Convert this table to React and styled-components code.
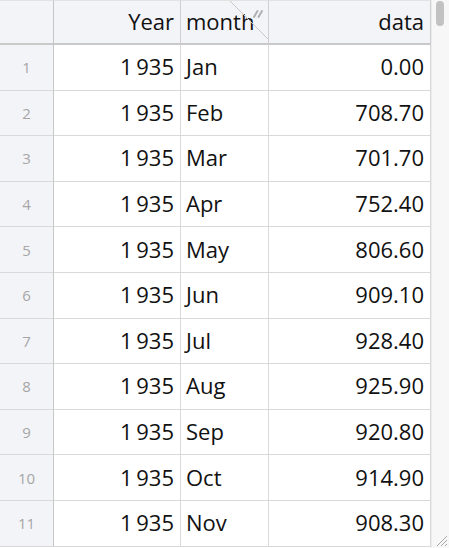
import React from "react";
import styled, { createGlobalStyle } from "styled-components";

const Global = createGlobalStyle`
  html, body { margin: 0; padding: 0; background: #fff; }
  body { font-family: "Open Sans", "Liberation Sans", sans-serif; }
`;

const Frame = styled.div`
  position: relative;
  width: 449px;
  height: 548px;
  overflow: hidden;
  display: flex;
  background: #fff;
`;

const Grid = styled.div`
  display: grid;
  grid-template-columns: 54px 127px 88px 162px;
  grid-template-rows: 45px;
  grid-auto-rows: 45.6px;
  width: 431px;
  align-content: start;
`;

const Cell = styled.div`
  box-sizing: border-box;
  border-right: 1px solid #d9d9d9;
  border-bottom: 1px solid #d9d9d9;
  display: flex;
  align-items: center;
  justify-content: ${(p) => (p.$align === "left" ? "flex-start" : "flex-end")};
  padding: ${(p) => (p.$align === "left" ? "0 0 2px 5px" : "0 6px 2px 0")};
  font-size: 22px;
  color: #111;
  white-space: nowrap;
  background: #fff;
`;

const HeadCell = styled(Cell)`
  position: relative;
  background: #f3f4f8;
  border-top: 1px solid #e2e2e2;
  border-bottom: 2px solid #c9c9c9;
  border-right-color: #cfcfcf;
`;

const RowNum = styled.div`
  box-sizing: border-box;
  background: #f3f4f8;
  border-right: 1px solid #c6c6c6;
  border-bottom: 1px solid #d9d9d9;
  display: flex;
  align-items: center;
  justify-content: center;
  font-size: 15px;
  color: #a6a6a6;
`;

const Corner = styled(RowNum)`
  border-top: 1px solid #e2e2e2;
  border-bottom: 2px solid #c9c9c9;
`;

const Marker = styled.svg`
  position: absolute;
  top: 0;
  right: 0;
  width: 38px;
  height: 38px;
  pointer-events: none;
`;

const Scrollbar = styled.div`
  position: relative;
  width: 18px;
  height: 548px;
  background: #f7f7f7;
  border-left: 1px solid #ececec;
  box-sizing: border-box;
`;

const Thumb = styled.div`
  position: absolute;
  top: 1px;
  left: 4px;
  width: 8px;
  height: 25px;
  border-radius: 4px;
  background: #c2c2c2;
`;

const Grip = styled.svg`
  position: absolute;
  right: 1px;
  bottom: 1px;
  width: 15px;
  height: 15px;
`;

const rows = [
  ["Jan", "0.00"],
  ["Feb", "708.70"],
  ["Mar", "701.70"],
  ["Apr", "752.40"],
  ["May", "806.60"],
  ["Jun", "909.10"],
  ["Jul", "928.40"],
  ["Aug", "925.90"],
  ["Sep", "920.80"],
  ["Oct", "914.90"],
  ["Nov", "908.30"],
];

export default function App() {
  return (
    <>
      <Global />
      <Frame>
        <Grid>
          <Corner />
          <HeadCell>Year</HeadCell>
          <HeadCell $align="left">
            month
            <Marker viewBox="0 0 38 38">
              <line x1="0" y1="0" x2="38" y2="38" stroke="#c8c8c8" strokeWidth="1" />
              <line x1="24" y1="16" x2="27.5" y2="10" stroke="#b0b0b0" strokeWidth="2" strokeLinecap="round" />
              <line x1="28.5" y1="16" x2="32" y2="10" stroke="#b0b0b0" strokeWidth="2" strokeLinecap="round" />
            </Marker>
          </HeadCell>
          <HeadCell>data</HeadCell>
          {rows.map(([m, v], i) => (
            <React.Fragment key={m}>
              <RowNum>{i + 1}</RowNum>
              <Cell>1&#8201;935</Cell>
              <Cell $align="left">{m}</Cell>
              <Cell>{v}</Cell>
            </React.Fragment>
          ))}
        </Grid>
        <Scrollbar>
          <Thumb />
          <Grip viewBox="0 0 15 15">
            <line x1="14" y1="4" x2="4" y2="14" stroke="#a8a8a8" strokeWidth="1" />
            <line x1="14" y1="8" x2="8" y2="14" stroke="#a8a8a8" strokeWidth="1" />
            <line x1="14" y1="12" x2="12" y2="14" stroke="#a8a8a8" strokeWidth="1" />
          </Grip>
        </Scrollbar>
      </Frame>
    </>
  );
}
